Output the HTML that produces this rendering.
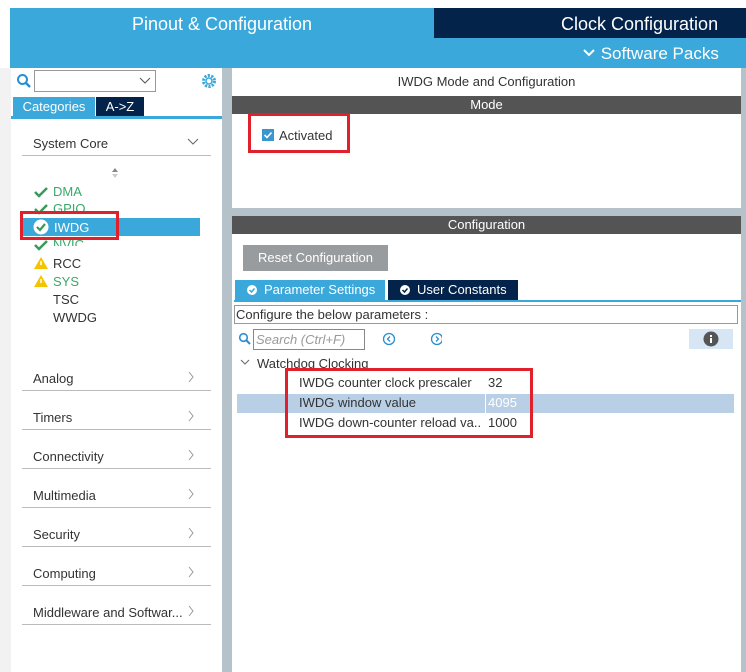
<!DOCTYPE html>
<html><head><meta charset="utf-8"><style>
*{margin:0;padding:0;box-sizing:border-box}
body{width:746px;height:672px;overflow:hidden;background:#fff;font-family:"Liberation Sans",sans-serif;position:relative;font-size:13px;color:#333}
.a{position:absolute}
.t{white-space:nowrap}
</style></head><body>
<div class="a" style="left:10px;top:8px;width:736px;height:60px;background:#3aa8da"></div>
<div class="a" style="left:434px;top:8px;width:312px;height:30px;background:#03234b"></div>
<div class="a t" style="left:10px;top:14px;width:424px;text-align:center;color:#fff;font-size:18px">Pinout &amp; Configuration</div>
<div class="a t" style="left:561px;top:14px;color:#fff;font-size:18px">Clock Configuration</div>
<div class="a t" style="left:582px;top:44px;color:#fff;font-size:17px"><svg width="14" height="10" style="vertical-align:1px"><path d="M2 2l5 5 5-5" stroke="#fff" stroke-width="2" fill="none"/></svg> Software Packs</div>
<!-- left panel -->
<div class="a" style="left:0;top:68px;width:11px;height:604px;background:#f2f2f2"></div>
<div class="a" style="left:222px;top:68px;width:10px;height:604px;background:#b6c2ca"></div>
<div class="a" style="left:741px;top:68px;width:5px;height:604px;background:#b6c2ca"></div>
<svg class="a" style="left:16px;top:73px" width="16" height="16"><circle cx="6.5" cy="6.5" r="4.5" stroke="#2a8fd0" stroke-width="2" fill="none"/><path d="M10 10l4 4" stroke="#2a8fd0" stroke-width="2.5"/></svg>
<div class="a" style="left:34px;top:70px;width:122px;height:22px;border:1px solid #999;background:#fff"></div>
<svg class="a" style="left:139px;top:77px" width="12" height="8"><path d="M1 1l5 5 5-5" stroke="#555" fill="none"/></svg>
<svg class="a" style="left:200px;top:72px" width="18" height="18"><circle cx="9" cy="9" r="5.5" stroke="#3aa8da" stroke-width="3" stroke-dasharray="2.2 1.3" fill="none"/><circle cx="9" cy="9" r="3" stroke="#3aa8da" stroke-width="1.5" fill="none"/></svg>
<div class="a t" style="left:13px;top:97px;width:82px;height:20px;background:#3aa8da;color:#fff;text-align:center;line-height:19px;font-size:13px">Categories</div>
<div class="a t" style="left:96px;top:97px;width:48px;height:20px;background:#03234b;color:#fff;text-align:center;line-height:19px">A-&gt;Z</div>
<div class="a" style="left:11px;top:116px;width:211px;height:3px;background:#3aa8da"></div>
<div class="a t" style="left:33px;top:136px;color:#333">System Core</div>
<svg class="a" style="left:187px;top:138px" width="12" height="8"><path d="M1 1l5 5 5-5" stroke="#666" fill="none"/></svg>
<div class="a" style="left:22px;top:155px;width:189px;height:1px;background:#bbb"></div>
<svg class="a" style="left:111px;top:168px" width="8" height="10"><path d="M4 0l3 4H1z" fill="#888"/><path d="M4 10l3-4H1z" fill="#ccc"/></svg>
<div class="a" style="left:22px;top:218px;width:178px;height:18px;background:#3aa8da"></div>
<svg class="a" style="left:34px;top:186px" width="14" height="12"><path d="M1 6l4 4 8-8" stroke="#3a9a5a" stroke-width="2.5" fill="none"/></svg>
<div class="a t" style="left:53px;top:184px;color:#3aa86a">DMA</div>
<svg class="a" style="left:34px;top:203px" width="14" height="12"><path d="M1 6l4 4 8-8" stroke="#3a9a5a" stroke-width="2.5" fill="none"/></svg>
<div class="a t" style="left:53px;top:201px;color:#3aa86a">GPIO</div>
<svg class="a" style="left:33px;top:219px" width="16" height="16"><circle cx="8" cy="8" r="7.5" fill="#fff"/><path d="M4 8l3 3 5-6" stroke="#3a9a5a" stroke-width="2.2" fill="none"/></svg>
<div class="a t" style="left:54px;top:220px;color:#fff">IWDG</div>
<svg class="a" style="left:34px;top:239px" width="14" height="12"><path d="M1 6l4 4 8-8" stroke="#3a9a5a" stroke-width="2.5" fill="none"/></svg>
<div class="a t" style="left:53px;top:237px;color:#3aa86a;height:9px;overflow:hidden">NVIC</div>
<svg class="a" style="left:34px;top:257px" width="14" height="12"><path d="M7 0l7 12H0z" fill="#f5c400"/><path d="M7 4v4" stroke="#fff" stroke-width="1.5"/></svg>
<div class="a t" style="left:53px;top:256px;color:#333">RCC</div>
<svg class="a" style="left:34px;top:275px" width="14" height="12"><path d="M7 0l7 12H0z" fill="#f5c400"/><path d="M7 4v4" stroke="#fff" stroke-width="1.5"/></svg>
<div class="a t" style="left:53px;top:274px;color:#3aa86a">SYS</div>
<div class="a t" style="left:53px;top:292px">TSC</div>
<div class="a t" style="left:53px;top:310px">WWDG</div>
<div class="a" style="left:20px;top:211px;width:99px;height:29px;border:3px solid #e0202a"></div>

<div class="a t" style="left:33px;top:371px">Analog</div>
<div class="a t" style="left:33px;top:410px">Timers</div>
<div class="a t" style="left:33px;top:449px">Connectivity</div>
<div class="a t" style="left:33px;top:488px">Multimedia</div>
<div class="a t" style="left:33px;top:527px">Security</div>
<div class="a t" style="left:33px;top:566px">Computing</div>
<div class="a t" style="left:33px;top:605px">Middleware and Softwar...</div>
<svg class="a" style="left:0;top:0" width="222" height="672"><g stroke="#999" fill="none">
<path d="M189 372l4 5-4 5M189 411l4 5-4 5M189 450l4 5-4 5M189 489l4 5-4 5M189 528l4 5-4 5M189 567l4 5-4 5M189 606l4 5-4 5"/></g>
<g fill="#bbb"><rect x="22" y="390" width="189" height="1"/><rect x="22" y="429" width="189" height="1"/><rect x="22" y="468" width="189" height="1"/><rect x="22" y="507" width="189" height="1"/><rect x="22" y="546" width="189" height="1"/><rect x="22" y="585" width="189" height="1"/><rect x="22" y="624" width="189" height="1"/></g></svg>

<!-- right -->
<div class="a t" style="left:232px;top:74px;width:509px;text-align:center;font-size:13px">IWDG Mode and Configuration</div>
<div class="a t" style="left:232px;top:96px;width:509px;height:18px;background:#535453;color:#fff;text-align:center;line-height:18px;font-size:13px">Mode</div>
<div class="a" style="left:262px;top:129px;width:12px;height:12px;background:#3a96d0"></div>
<svg class="a" style="left:262px;top:129px" width="12" height="12"><path d="M2.5 6l2.5 2.5 4.5-5" stroke="#fff" stroke-width="1.6" fill="none"/></svg>
<div class="a t" style="left:279px;top:128px;font-size:13px">Activated</div>
<div class="a" style="left:248px;top:113px;width:102px;height:40px;border:3px solid #e0202a"></div>
<div class="a" style="left:232px;top:208px;width:509px;height:8px;background:#b6c2ca"></div>
<div class="a t" style="left:232px;top:216px;width:509px;height:18px;background:#535453;color:#fff;text-align:center;line-height:18px;font-size:13px">Configuration</div>
<div class="a t" style="left:243px;top:245px;width:145px;height:26px;background:#999c9e;color:#fff;text-align:center;line-height:26px;font-size:13px">Reset Configuration</div>
<div class="a t" style="left:235px;top:280px;width:150px;height:20px;background:#3aa8da;color:#fff;line-height:20px;font-size:13px;padding-left:29px">Parameter Settings</div>
<div class="a t" style="left:388px;top:280px;width:130px;height:20px;background:#03234b;color:#fff;line-height:20px;font-size:13px;padding-left:29px">User Constants</div>
<svg class="a" style="left:246px;top:284px" width="12" height="12"><circle cx="6" cy="6" r="5" fill="#fff"/><path d="M3.5 6l2 2 3-3.5" stroke="#3aa8da" stroke-width="1.5" fill="none"/></svg>
<svg class="a" style="left:399px;top:284px" width="12" height="12"><circle cx="6" cy="6" r="5" fill="#fff"/><path d="M3.5 6l2 2 3-3.5" stroke="#03234b" stroke-width="1.5" fill="none"/></svg>
<div class="a" style="left:234px;top:300px;width:507px;height:2px;background:#3aa8da"></div>
<div class="a t" style="left:234px;top:305px;width:504px;height:19px;border:1px solid #999;font-size:13px;line-height:17px;padding-left:1px">Configure the below parameters :</div>
<svg class="a" style="left:238px;top:332px" width="14" height="14"><circle cx="5.5" cy="5.5" r="3.8" stroke="#2a8fd0" stroke-width="1.6" fill="none"/><path d="M8.5 8.5l3.5 3.5" stroke="#2a8fd0" stroke-width="2"/></svg>
<div class="a t" style="left:253px;top:329px;width:112px;height:21px;border:1px solid #888;color:#999;font-style:italic;font-size:13px;line-height:19px;padding-left:2px">Search (Ctrl+F)</div>
<svg class="a" style="left:382px;top:332px" width="60" height="14"><circle cx="7" cy="7" r="5.5" stroke="#2a8fd0" stroke-width="1.3" fill="none"/><path d="M8 4.5l-2.5 2.5 2.5 2.5" stroke="#2a8fd0" stroke-width="1.3" fill="none"/><circle cx="55" cy="7" r="5.5" stroke="#2a8fd0" stroke-width="1.3" fill="none"/><path d="M54 4.5l2.5 2.5-2.5 2.5" stroke="#2a8fd0" stroke-width="1.3" fill="none"/></svg>
<div class="a" style="left:689px;top:329px;width:44px;height:20px;background:#d6e6f4"></div>
<svg class="a" style="left:703px;top:331px" width="16" height="16"><circle cx="8" cy="8" r="7.5" fill="#555"/><rect x="7" y="7" width="2" height="5" fill="#fff"/><rect x="7" y="4" width="2" height="2" fill="#fff"/></svg>
<svg class="a" style="left:240px;top:359px" width="10" height="7"><path d="M1 1l4 4 4-4" stroke="#666" fill="none"/></svg>
<div class="a t" style="left:257px;top:356px;font-size:13px">Watchdog Clocking</div>
<div class="a" style="left:237px;top:394px;width:497px;height:19px;background:#b9cfe6"></div>
<div class="a" style="left:485px;top:394px;width:1px;height:19px;background:#fff"></div>
<div class="a t" style="left:299px;top:375px;font-size:13px">IWDG counter clock prescaler</div>
<div class="a t" style="left:488px;top:375px;font-size:13px">32</div>
<div class="a t" style="left:299px;top:395px;font-size:13px">IWDG window value</div>
<div class="a t" style="left:488px;top:395px;font-size:13px;color:#fff">4095</div>
<div class="a t" style="left:299px;top:415px;font-size:13px;width:183px;overflow:hidden">IWDG down-counter reload va...</div>
<div class="a t" style="left:488px;top:415px;font-size:13px">1000</div>
<div class="a" style="left:285px;top:368px;width:248px;height:70px;border:3px solid #e0202a"></div>
</body></html>
